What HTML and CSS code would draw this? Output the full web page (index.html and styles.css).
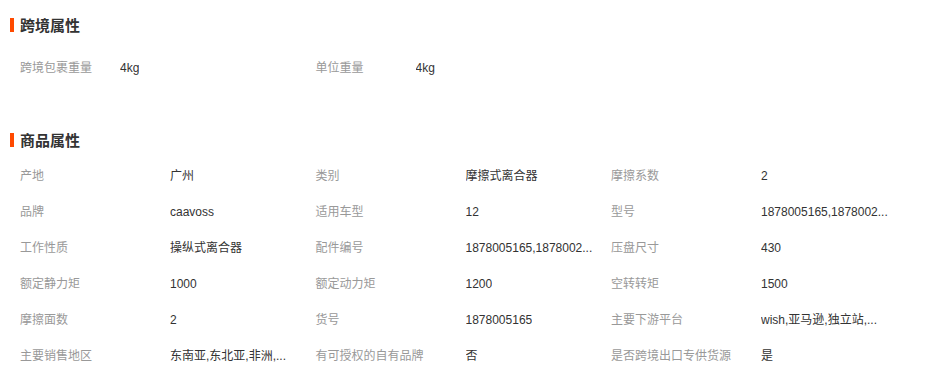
FILE: index.html
```html
<!DOCTYPE html>
<html lang="zh-CN">
<head>
<meta charset="utf-8">
<title>属性</title>
<link rel="stylesheet" href="styles.css">
</head>
<body>
<section class="section section-first">
  <h2 class="section-title">跨境属性</h2>
  <div class="attr-grid attr-grid-narrow">
    <div class="attr"><span class="attr-label">跨境包裹重量</span><span class="attr-value">4kg</span></div>
    <div class="attr"><span class="attr-label">单位重量</span><span class="attr-value">4kg</span></div>
  </div>
</section>
<section class="section section-second">
  <h2 class="section-title">商品属性</h2>
  <div class="attr-grid attr-grid-wide">
    <div class="attr"><span class="attr-label">产地</span><span class="attr-value">广州</span></div>
    <div class="attr"><span class="attr-label">类别</span><span class="attr-value">摩擦式离合器</span></div>
    <div class="attr"><span class="attr-label">摩擦系数</span><span class="attr-value">2</span></div>
    <div class="attr"><span class="attr-label">品牌</span><span class="attr-value">caavoss</span></div>
    <div class="attr"><span class="attr-label">适用车型</span><span class="attr-value">12</span></div>
    <div class="attr"><span class="attr-label">型号</span><span class="attr-value">1878005165,1878002...</span></div>
    <div class="attr"><span class="attr-label">工作性质</span><span class="attr-value">操纵式离合器</span></div>
    <div class="attr"><span class="attr-label">配件编号</span><span class="attr-value">1878005165,1878002...</span></div>
    <div class="attr"><span class="attr-label">压盘尺寸</span><span class="attr-value">430</span></div>
    <div class="attr"><span class="attr-label">额定静力矩</span><span class="attr-value">1000</span></div>
    <div class="attr"><span class="attr-label">额定动力矩</span><span class="attr-value">1200</span></div>
    <div class="attr"><span class="attr-label">空转转矩</span><span class="attr-value">1500</span></div>
    <div class="attr"><span class="attr-label">摩擦面数</span><span class="attr-value">2</span></div>
    <div class="attr"><span class="attr-label">货号</span><span class="attr-value">1878005165</span></div>
    <div class="attr"><span class="attr-label">主要下游平台</span><span class="attr-value">wish,亚马逊,独立站,...</span></div>
    <div class="attr"><span class="attr-label">主要销售地区</span><span class="attr-value">东南亚,东北亚,非洲,...</span></div>
    <div class="attr"><span class="attr-label">有可授权的自有品牌</span><span class="attr-value">否</span></div>
    <div class="attr"><span class="attr-label">是否跨境出口专供货源</span><span class="attr-value">是</span></div>
  </div>
</section>
</body>
</html>
```

FILE: styles.css
```css
* { box-sizing: border-box; }
html, body { margin: 0; padding: 0; background: #fff; }
body {
  width: 930px;
  font-family: "Liberation Sans", "Noto Sans CJK SC", sans-serif;
  font-size: 12px;
  color: #333;
}
.section { padding: 0 0 0 10px; }
.section-first { padding-top: 15px; }
.section-second { padding-top: 44px; }
.section-title {
  margin: 0;
  height: 20px;
  line-height: 20px;
  font-size: 15px;
  font-weight: bold;
  color: #333;
  display: flex;
  align-items: center;
  gap: 6px;
  font-family: "Noto Sans CJK SC", sans-serif;
}
.section-title::before {
  content: "";
  width: 4px;
  height: 14px;
  background: #ff4a00;
}
.attr-grid {
  display: grid;
  grid-template-columns: 295.5px 295.5px 295.5px;
  padding-left: 10px;
}
.section-first .attr-grid { margin-top: 15px; }
.section-second .attr-grid { margin-top: 8px; }
.attr {
  display: flex;
  height: 36px;
  line-height: 36px;
  white-space: nowrap;
}
.attr-label { color: #999; flex: none; }
.attr-grid-narrow .attr-label { width: 100px; }
.attr-grid-wide .attr-label { width: 150px; }
.attr-value { color: #333; overflow: hidden; }
```
